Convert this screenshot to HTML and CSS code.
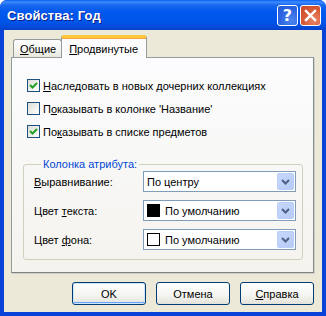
FILE: index.html
```html
<!DOCTYPE html>
<html lang="ru">
<head>
  <meta charset="UTF-8">
  <title>Свойства: Год</title>
  <link rel="stylesheet" href="styles.css">
</head>
<body>
  <div class="window">
    <div class="titlebar">
      <span class="title">Свойства: Год</span>
      <div class="title-buttons">
        <span class="tb-btn help">?</span>
        <span class="tb-btn close">
          <svg width="13" height="13" viewBox="0 0 13 13"><path d="M2 2 L11 11 M11 2 L2 11" stroke="#fff" stroke-width="2.4" stroke-linecap="square"/></svg>
        </span>
      </div>
    </div>

    <div class="client">
      <div class="tabs">
        <div class="tab"><u>О</u>бщие</div>
        <div class="tab active"><u>П</u>родвинутые</div>
      </div>

      <div class="panel">
        <div class="checks">
          <label class="check"><span class="box on"></span><span><u>Н</u>аследовать в новых дочерних коллекциях</span></label>
          <label class="check"><span class="box"></span><span>П<u>о</u>казывать в колонке 'Название'</span></label>
          <label class="check"><span class="box on"></span><span>По<u>к</u>азывать в списке предметов</span></label>
        </div>

        <fieldset class="group">
          <legend>Колонка атрибута:</legend>
          <div class="field">
            <span class="field-label"><u>В</u>ыравнивание:</span>
            <div class="combo"><span class="combo-text">По центру</span><span class="combo-btn"></span></div>
          </div>
          <div class="field">
            <span class="field-label">Цвет <u>т</u>екста:</span>
            <div class="combo"><span class="swatch black"></span><span class="combo-text">По умолчанию</span><span class="combo-btn"></span></div>
          </div>
          <div class="field">
            <span class="field-label">Цвет <u>ф</u>она:</span>
            <div class="combo"><span class="swatch"></span><span class="combo-text">По умолчанию</span><span class="combo-btn"></span></div>
          </div>
        </fieldset>
      </div>

      <div class="buttons">
        <button class="btn default">OK</button>
        <button class="btn">Отмена</button>
        <button class="btn"><u>С</u>правка</button>
      </div>
    </div>
  </div>
</body>
</html>
```

FILE: styles.css
```css
body {
  margin: 0;
  font-family: "Liberation Sans", Arial, sans-serif;
  font-size: 11px;
  color: #000;
  background: #fff;
}
u {
  text-decoration-thickness: 1px;
  text-underline-offset: 1px;
}
.window {
  width: 326px;
  height: 316px;
  box-sizing: border-box;
  display: flex;
  flex-direction: column;
  background: #0842d8;
  border-radius: 7px 7px 0 0;
  overflow: hidden;
}
.titlebar {
  height: 30px;
  flex: none;
  display: flex;
  align-items: center;
  padding: 0 5px 0 7px;
  background: linear-gradient(#0a5ff0 0, #3d8bff 2px, #1a68ef 5px, #0058ee 12px, #0055e8 22px, #0348d6 28px, #0a3fc8 30px);
}
.title {
  color: #fff;
  font-weight: bold;
  font-size: 13px;
  text-shadow: 1px 1px 0 #0a1e8c;
  letter-spacing: 0.1px;
  padding-top: 1px;
}
.title-buttons {
  margin-left: auto;
  display: flex;
  gap: 2px;
}
.tb-btn {
  width: 21px;
  height: 21px;
  box-sizing: border-box;
  border: 1px solid #fff;
  border-radius: 3px;
  display: flex;
  align-items: center;
  justify-content: center;
  color: #fff;
}
.help {
  background: radial-gradient(circle at 70% 75%, #4d86f0 0, #2b63e0 60%, #2359d6 100%);
  font-weight: bold;
  font-size: 16px;
  font-family: "DejaVu Sans", sans-serif;
}
.close {
  background: radial-gradient(circle at 70% 75%, #e9866a 0, #d75a36 55%, #c8452a 100%);
}
.client {
  flex: 1;
  margin: 0 4px 4px;
  background: #ece9d8;
  padding: 5px 8px 7px 7px;
  display: flex;
  flex-direction: column;
}
.tabs {
  display: flex;
  align-items: flex-end;
  padding-left: 2px;
  height: 22px;
  position: relative;
  z-index: 1;
}
.tab {
  height: 18px;
  box-sizing: border-box;
  padding: 3px 5px 0 6px;
  border: 1px solid #919b9c;
  border-bottom: none;
  border-radius: 3px 3px 0 0;
  background: linear-gradient(#fff, #f3f3ef 60%, #e8e8e0);
}
.tab.active {
  padding: 5px 8px 0 7px;
  margin-left: -1px;
  background: #fcfcfe;
  border-top: 3px solid #ffc83c;
  box-shadow: inset 0 1px 0 #f5a73a;
  margin-bottom: -1px;
  height: 23px;
}
.panel {
  height: 216px;
  box-sizing: border-box;
  border: 1px solid #919b9c;
  border-right-color: #848d8e;
  border-bottom-color: #7c8485;
  background: linear-gradient(#fcfcfe, #f4f3ee);
  padding: 21px 10px 0 11px;
  box-shadow: 1px 1px 0 #d0cfc4;
}
.checks {
  display: flex;
  flex-direction: column;
  gap: 10px;
  padding-left: 4px;
}
.check {
  display: flex;
  align-items: center;
  gap: 3px;
  height: 13px;
}
.box {
  width: 13px;
  height: 13px;
  box-sizing: border-box;
  border: 1px solid #1c5180;
  background: linear-gradient(135deg, #dcdcd7, #fff);
  flex: none;
}
.box.on {
  background: url("data:image/svg+xml,%3Csvg xmlns='http://www.w3.org/2000/svg' width='11' height='11'%3E%3Cpath d='M2 5 L4.5 7.5 L9 3' fill='none' stroke='%2321a121' stroke-width='2'/%3E%3C/svg%3E") center/11px 11px no-repeat, linear-gradient(135deg, #dcdcd7, #fff);
}
.group {
  margin: 20px 0 0;
  padding: 1px 6px 9px 10px;
  border: 1px solid #d0d0bf;
  border-radius: 3px;
  display: flex;
  flex-direction: column;
  gap: 8px;
  min-width: 0;
}
.group legend {
  color: #0046d5;
  padding: 0 2px;
  margin-left: 7px;
}
.field {
  display: flex;
  align-items: center;
  height: 21px;
}
.field-label {
  width: 109px;
  flex: none;
}
.combo {
  width: 154px;
  height: 21px;
  box-sizing: border-box;
  border: 1px solid #7f9db9;
  background: #fff;
  display: flex;
  align-items: center;
  padding: 0 1px 0 3px;
}
.combo-text {
  flex: 1;
}
.swatch {
  width: 13px;
  height: 13px;
  box-sizing: border-box;
  border: 1px solid #000;
  margin-right: 5px;
  background: #fff;
}
.swatch.black {
  background: #000;
}
.combo-btn {
  width: 17px;
  height: 17px;
  border-radius: 2px;
  background: url("data:image/svg+xml,%3Csvg xmlns='http://www.w3.org/2000/svg' width='17' height='17'%3E%3Cpath d='M5 7 L8.5 10.5 L12 7' fill='none' stroke='%234d6185' stroke-width='2'/%3E%3C/svg%3E") center no-repeat, linear-gradient(135deg, #c9d9fc, #b3c9f6);
  box-shadow: inset 0 0 0 1px #b9cdf7;
}
.buttons {
  margin-top: auto;
  display: flex;
  justify-content: flex-end;
  gap: 10px;
}
.btn {
  width: 74px;
  height: 23px;
  font: inherit;
  border: 1px solid #003c74;
  border-radius: 3px;
  background: linear-gradient(#fff, #f4f4f0 60%, #e3e2da);
  color: #000;
  padding: 0;
}
.btn.default {
  box-shadow: inset 0 0 0 1px #cee7ff, inset 0 -1px 0 1px #69a3f4;
}
```
